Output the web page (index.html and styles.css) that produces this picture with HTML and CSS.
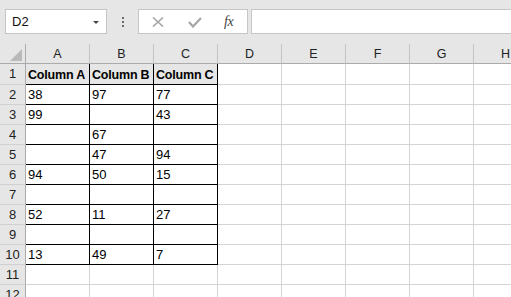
FILE: index.html
```html
<!DOCTYPE html>
<html lang="en">
<head>
  <meta charset="UTF-8">
  <title>Sheet1</title>
  <link rel="stylesheet" href="styles.css">
</head>
<body>
  <!-- formula bar -->
  <div class="toolbar">
    <div class="name-box">
      <span>D2</span>
      <span class="caret"></span>
    </div>
    <div class="grip"><i></i><i></i><i></i></div>
    <div class="fx-buttons">
      <svg class="btn-x" width="12" height="10" viewBox="0 0 12 10">
        <path d="M1 0.5 L11 9.5 M11 0.5 L1 9.5" stroke="#a6a6a6" stroke-width="1.6" fill="none"/>
      </svg>
      <svg class="btn-ok" width="14" height="11" viewBox="0 0 14 11">
        <path d="M1 5 L5 9.5 L13 1" stroke="#a6a6a6" stroke-width="2.2" fill="none"/>
      </svg>
      <span class="fx">fx</span>
    </div>
    <div class="formula"></div>
  </div>

  <!-- sheet -->
  <div class="sheet" id="sheet"></div>

  <script>
    const cols = ['A', 'B', 'C', 'D', 'E', 'F', 'G', 'H'];
    const data = [
      ['Column A', 'Column B', 'Column C'],
      ['38', '97', '77'],
      ['99', '', '43'],
      ['', '67', ''],
      ['', '47', '94'],
      ['94', '50', '15'],
      ['', '', ''],
      ['52', '11', '27'],
      ['', '', ''],
      ['13', '49', '7']
    ];
    const sheet = document.getElementById('sheet');

    function cell(cls, text) {
      const d = document.createElement('div');
      d.className = cls;
      d.textContent = text || '';
      sheet.appendChild(d);
    }

    // column headers
    const corner = document.createElement('div');
    corner.className = 'corner';
    corner.innerHTML = '<span class="tri"></span>';
    sheet.appendChild(corner);
    cols.forEach(c => cell('col-head', c));

    // rows
    for (let r = 1; r <= 12; r++) {
      cell('row-head', r);
      cols.forEach((c, i) => {
        const row = data[r - 1];
        if (row && i < 3) {
          cell('cell table' + (r === 1 ? ' title' : ''), row[i]);
        } else {
          cell('cell', '');
        }
      });
    }
  </script>
</body>
</html>
```

FILE: styles.css
```css
* {
  margin: 0;
  padding: 0;
  box-sizing: border-box;
}
body {
  width: 511px;
  height: 297px;
  overflow: hidden;
  background-color: #e6e6e6;
  font-family: 'Liberation Sans', Arial, sans-serif;
}

/* formula bar */
.toolbar {
  display: flex;
  align-items: center;
  height: 44px;
  padding: 9px 0 10px 5px;
}
.name-box {
  width: 102px;
  height: 25px;
  background: #fff;
  border: 1px solid #c6c6c6;
  display: flex;
  align-items: center;
  justify-content: space-between;
  padding: 0 7px 0 6px;
  font-size: 13px;
  color: #111;
}
.caret {
  width: 0;
  height: 0;
  border-left: 3px solid transparent;
  border-right: 3px solid transparent;
  border-top: 3px solid #444;
  margin-top: 1px;
}
.grip {
  width: 31px;
  display: flex;
  flex-direction: column;
  align-items: center;
  gap: 2px;
}
.grip i {
  width: 2px;
  height: 2px;
  background: #6a6a6a;
}
.fx-buttons {
  width: 110px;
  height: 25px;
  background: #fff;
  border: 1px solid #c6c6c6;
  display: flex;
  align-items: center;
  padding-left: 13px;
}
.btn-ok {
  margin-left: 24px;
  margin-top: 1px;
}
.fx {
  margin-left: 22px;
  font-family: 'Liberation Serif', serif;
  font-style: italic;
  font-size: 14px;
  color: #444;
  letter-spacing: -0.5px;
}
.formula {
  flex: 1;
  height: 25px;
  margin-left: 3px;
  background: #fff;
  border: 1px solid #c6c6c6;
  border-right: none;
}

/* grid */
.sheet {
  display: grid;
  grid-template-columns: 26px repeat(8, 64px);
  grid-template-rows: 20px 21px repeat(11, 20px);
  background: #fff;
}
.corner, .col-head, .row-head {
  background: #e6e6e6;
  color: #222;
  font-size: 12.5px;
}
.corner {
  position: relative;
  border-right: 1px solid #ababab;
  border-bottom: 1px solid #ababab;
}
.corner .tri {
  position: absolute;
  right: 3px;
  bottom: 2px;
  width: 0;
  height: 0;
  border-left: 12px solid transparent;
  border-bottom: 12px solid #b9b9b9;
}
.col-head {
  text-align: center;
  line-height: 18px;
  padding-top: 1px;
  border-bottom: 1px solid #ababab;
  border-right: 1px solid #c4c4c4;
}
.row-head {
  text-align: center;
  line-height: 18px;
  padding-top: 1px;
  font-size: 13px;
  border-right: 1px solid #ababab;
  border-bottom: 1px solid #d0d0d0;
}
.cell {
  font-size: 13px;
  color: #000;
  line-height: 18px;
  padding: 1px 0 0 2px;
  white-space: nowrap;
  overflow: hidden;
  border-right: 1px solid #d4d4d4;
  border-bottom: 1px solid #d4d4d4;
}
.cell.table {
  border-right-color: #000;
  border-bottom-color: #000;
}
.cell.title {
  background: #e7e6e6;
  font-weight: bold;
  font-size: 12.5px;
  letter-spacing: -0.2px;
  padding-top: 2px;
}
```
